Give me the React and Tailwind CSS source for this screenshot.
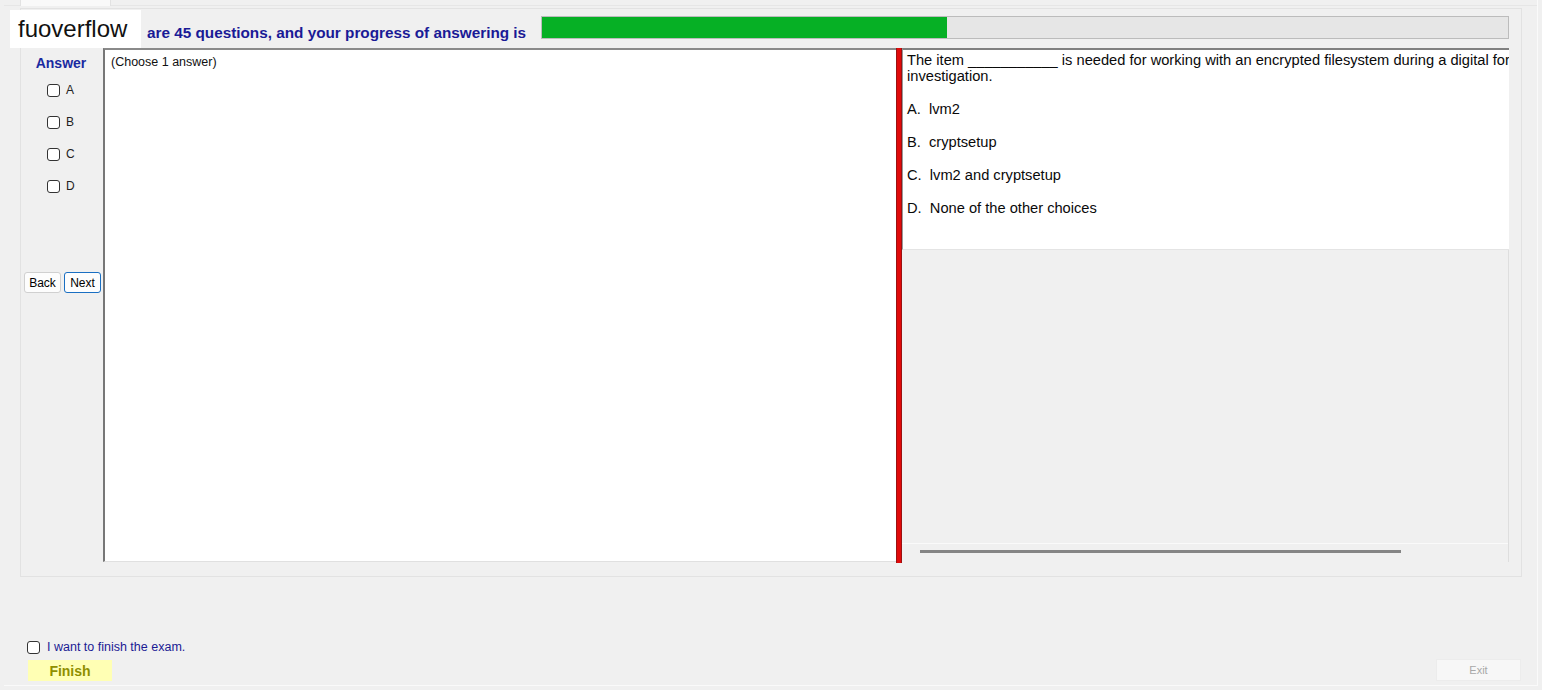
import React from "react";

const options = [
  ["A.", "lvm2"],
  ["B.", "cryptsetup"],
  ["C.", "lvm2 and cryptsetup"],
  ["D.", "None of the other choices"],
];

function Box() {
  return <span className="block w-[13px] h-[13px] rounded-[3px] border border-[#333333] bg-white shrink-0" />;
}

export default function App() {
  return (
    <div className="relative w-[1542px] h-[690px] overflow-hidden bg-[#f0f0f0] font-['Liberation_Sans',Arial,sans-serif] text-black">
      <div className="ml-[4px] w-[1534px] h-[686px] border-r border-b border-[#fafafa] flex flex-col">
        {/* tab strip */}
        <div className="h-[6px] flex border-b border-[#e6e6e6]">
          <div className="ml-[16px] w-[91px] h-[6px] bg-[#f9f9f9] border-x border-[#e2e2e2]" />
        </div>

        {/* question group */}
        <div className="ml-[16px] mt-[2px] w-[1502px] h-[569px] border border-[#e2e2e2] flex flex-col">
          <div className="h-[39px] flex items-start">
            <span className="ml-[126px] mt-[15px] w-[394px] text-[15.3px] leading-[18px] font-bold text-[#1a1a96] whitespace-nowrap">
              are 45 questions, and your progress of answering is
            </span>
            <div className="mt-[7px] w-[968px] h-[23px] border border-[#bcbcbc] bg-[#e6e6e6]">
              <div className="w-[405px] h-full bg-[#06b025]" />
            </div>
          </div>

          <div className="flex h-[515px]">
            {/* answer column */}
            <div className="w-[82px] flex flex-col">
              <div className="pt-[6px] pr-[2px] text-center text-[14px] leading-[18px] font-bold text-[#1a2aa0]">Answer</div>
              <div className="mt-[2px] flex flex-col">
                {["A", "B", "C", "D"].map((l) => (
                  <div key={l} className="h-[32px] pl-[26px] flex items-center gap-[6px]">
                    <Box />
                    <span className="text-[12px] text-[#222222]">{l}</span>
                  </div>
                ))}
              </div>
              <div className="mt-[70px] pl-[3px] flex gap-[3px]">
                <button className="w-[37px] h-[21px] bg-[#fdfdfd] border border-[#d0d0d0] rounded-[3px] text-[12px] leading-none">Back</button>
                <button className="w-[37px] h-[21px] bg-[#fdfdfd] border border-[#1a6fc2] rounded-[3px] text-[12px] leading-none">Next</button>
              </div>
            </div>

            {/* middle panel */}
            <div className="w-[793px] h-[514px] bg-white border-l-2 border-t-2 border-l-[#777777] border-t-[#8a8a8a] border-b border-b-[#e0e0e0] pl-[6px] pt-[5px]">
              <div className="text-[12.5px] leading-[15px] text-[#111111]">(Choose 1 answer)</div>
            </div>

            {/* divider */}
            <div className="w-[6px] h-[515px] bg-[#e10a0a] border-x border-[#9a1212]" />

            {/* question panel */}
            <div className="w-[607px] h-[514px] flex flex-col">
              <div className="h-[202px] bg-white border-t-2 border-t-[#808080] border-l border-l-[#9a9a9a] border-b border-b-[#e4e4e4] overflow-hidden pl-[4px] pt-[2px] text-[14.67px] leading-[16px] text-[#0a0a0a]">
                <div className="whitespace-nowrap">
                  The item ___________ is needed for working with an encrypted filesystem during a digital forensics
                </div>
                <div>investigation.</div>
                {options.map(([k, v]) => (
                  <div key={k} className="mt-[17px] whitespace-pre">
                    {k}  {v}
                  </div>
                ))}
              </div>
              <div className="flex-1 border-r border-[#dedede] flex flex-col">
                <div className="flex-1" />
                <div className="h-[19px] border-t border-[#fafafa] pt-[6px]">
                  <div className="ml-[18px] w-[481px] h-[3px] bg-[#858585]" />
                </div>
              </div>
            </div>
          </div>
        </div>

        {/* finish area */}
        <div className="mt-[63px] ml-[23px] flex items-center gap-[7px]">
          <Box />
          <span className="text-[12.5px] leading-[15px] text-[#1b1b94]">I want to finish the exam.</span>
        </div>
        <div className="mt-[4px] flex items-start">
          <button className="ml-[24px] mt-[1px] w-[84px] h-[21px] bg-[#ffffb4] text-[14px] font-bold text-[#8f8f00] leading-none">
            Finish
          </button>
          <button className="ml-auto mr-[16px] w-[85px] h-[22px] bg-[#f7f7f7] border border-[#ececec] text-[11px] text-[#a8a8a8] leading-none">
            Exit
          </button>
        </div>
      </div>

      {/* watermark logo */}
      <div className="absolute left-[10px] top-[10px] w-[131px] h-[38px] bg-white pl-[8px] text-[24px] leading-[38px] text-[#111111]">
        fuoverflow
      </div>
    </div>
  );
}
